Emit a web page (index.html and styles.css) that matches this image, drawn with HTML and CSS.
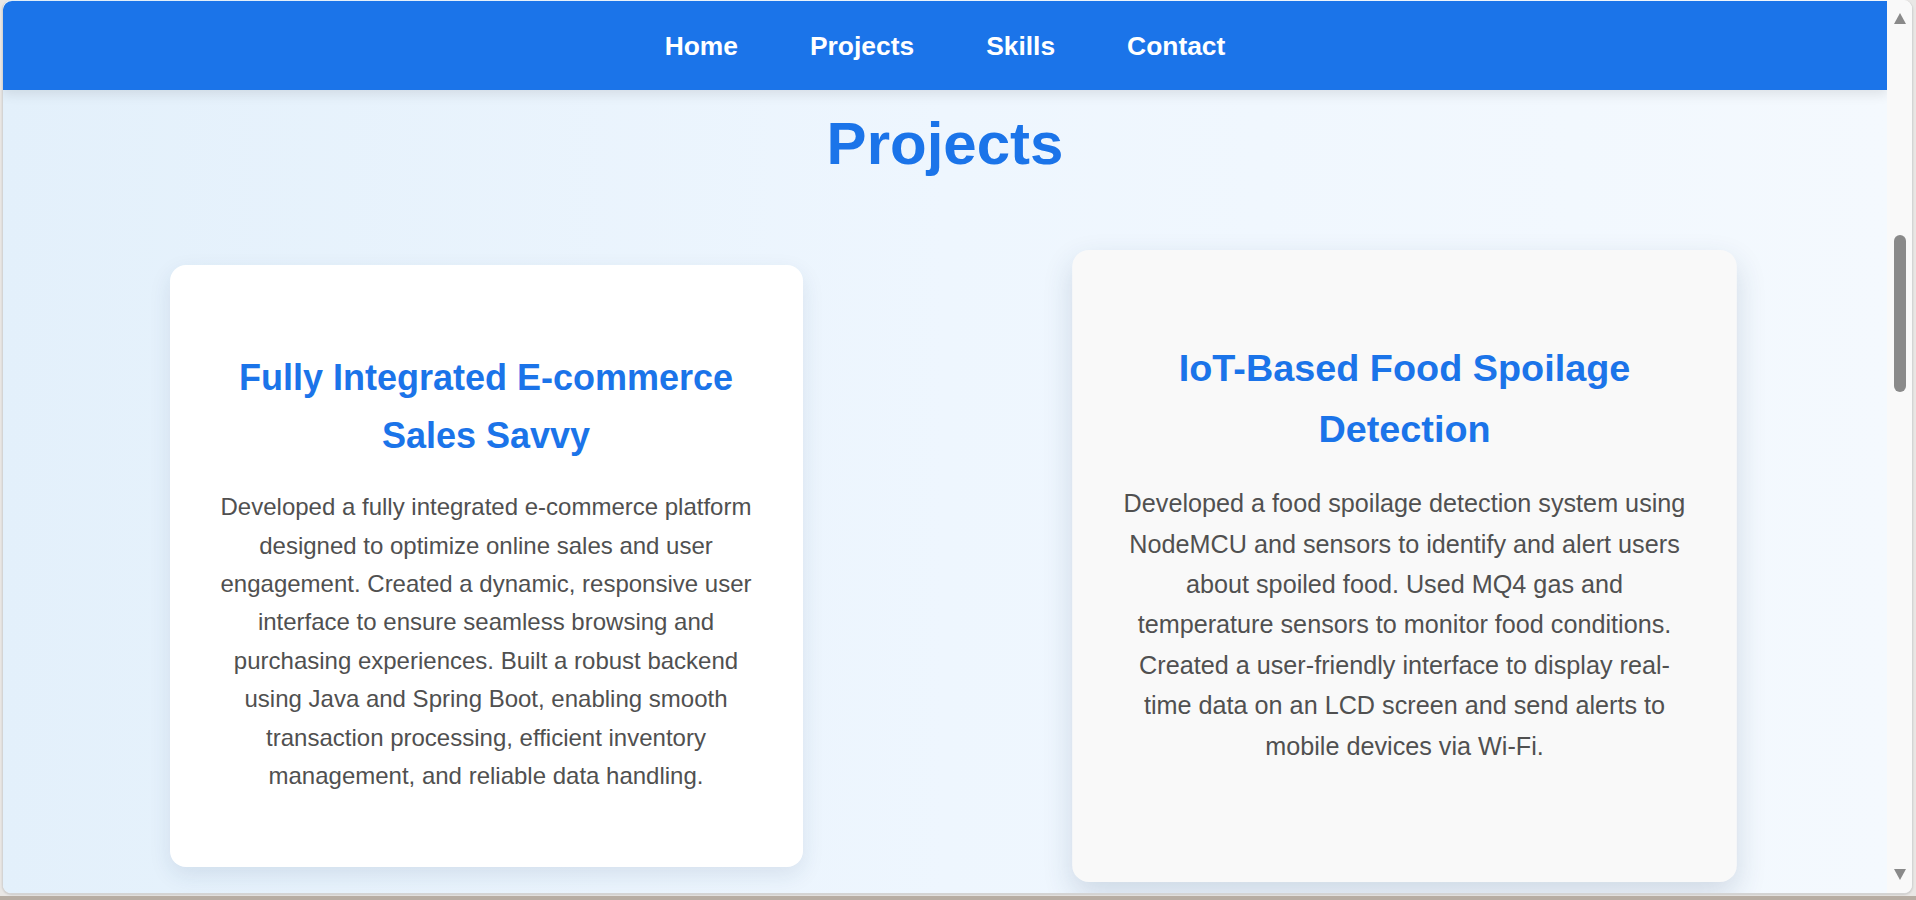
FILE: index.html
```html
<!DOCTYPE html>
<html lang="en">
<head>
<meta charset="utf-8">
<title>Projects</title>
<link rel="stylesheet" href="styles.css">
</head>
<body>
<div class="window">
  <div class="page">
    <nav class="nav">
      <a class="nav-link" href="#">Home</a>
      <a class="nav-link" href="#">Projects</a>
      <a class="nav-link" href="#">Skills</a>
      <a class="nav-link" href="#">Contact</a>
    </nav>
    <section class="projects">
      <h2 class="section-title">Projects</h2>
      <div class="cards">
        <div class="card">
          <h3 class="card-title">Fully Integrated E-commerce Sales Savvy</h3>
          <p class="card-text">Developed a fully integrated e-commerce platform designed to optimize online sales and user engagement. Created a dynamic, responsive user interface to ensure seamless browsing and purchasing experiences. Built a robust backend using Java and Spring Boot, enabling smooth transaction processing, efficient inventory management, and reliable data handling.</p>
        </div>
        <div class="card card-hover">
          <h3 class="card-title">IoT-Based Food Spoilage Detection</h3>
          <p class="card-text">Developed a food spoilage detection system using NodeMCU and sensors to identify and alert users about spoiled food. Used MQ4 gas and temperature sensors to monitor food conditions. Created a user-friendly interface to display real-time data on an LCD screen and send alerts to mobile devices via Wi-Fi.</p>
        </div>
      </div>
    </section>
  </div>
  <div class="scrollbar">
    <div class="arrow arrow-up"></div>
    <div class="track"><div class="thumb"></div></div>
    <div class="arrow arrow-down"></div>
  </div>
</div>
<div class="taskbar"></div>
</body>
</html>
```
FILE: styles.css
```css
html, body {
  margin: 0;
  padding: 0;
}
body {
  width: 1916px;
  height: 900px;
  overflow: hidden;
  background: #e9e7e5;
  font-family: "Liberation Sans", Arial, sans-serif;
}
.window {
  box-sizing: border-box;
  width: 1911px;
  height: 894px;
  margin-left: 2px;
  border: 1px solid #d4d4d4;
  border-top: none;
  border-radius: 9px;
  overflow: hidden;
  display: flex;
  background: #f8f8f8;
  box-shadow: 0 1px 2px rgba(0,0,0,0.12);
}
.page {
  flex: 1;
  overflow: hidden;
  background: linear-gradient(to right, #e3f0fb, #eef6fe 50%, #f4f9fe);
  border-top-left-radius: 9px;
}
.nav {
  margin-top: 1px;
  height: 89px;
  background: #1b74e9;
  display: flex;
  justify-content: center;
  align-items: center;
  box-shadow: 0 5px 12px rgba(0,0,0,0.09);
  position: relative;
  border-top-left-radius: 9px;
}
.nav-link {
  color: #fff;
  text-decoration: none;
  font-weight: bold;
  font-size: 26.4px;
  margin: 0 36px;
  padding-top: 2px;
}
.projects {
  text-align: center;
}
.section-title {
  margin: 18px 0 85px;
  font-size: 60px;
  line-height: 72px;
  color: #1b74e9;
  font-weight: bold;
}
.cards {
  display: grid;
  grid-template-columns: 633px 633px;
  column-gap: 285px;
  justify-content: center;
}
.card {
  box-sizing: border-box;
  background: #fff;
  border-radius: 16px;
  padding: 48px;
  box-shadow: 0 8px 22px rgba(30,60,100,0.10);
}
.card-hover {
  background: #f9f9f9;
  transform: scale(1.05);
  box-shadow: 0 12px 28px rgba(30,60,100,0.16);
}
.card-title {
  margin: 36px 0 24px;
  font-size: 36px;
  line-height: 1.6;
  color: #1b74e9;
  font-weight: bold;
}
.card-text {
  margin: 24px 0;
  font-size: 24px;
  line-height: 1.6;
  color: #505050;
}
.scrollbar {
  width: 25px;
  background: #f9f9f9;
  display: flex;
  flex-direction: column;
  align-items: center;
}
.arrow {
  width: 0;
  height: 0;
  border-left: 6px solid transparent;
  border-right: 6px solid transparent;
}
.arrow-up {
  margin-top: 13px;
  border-bottom: 11px solid #8a8a8a;
}
.arrow-down {
  margin-bottom: 13px;
  border-top: 11px solid #8a8a8a;
}
.track {
  flex: 1;
  width: 100%;
  display: flex;
  justify-content: center;
}
.thumb {
  margin-top: 211px;
  width: 12px;
  height: 157px;
  border-radius: 6px;
  background: #8a8a8a;
}
.taskbar {
  height: 4px;
  margin-top: 2px;
  background: #b7ada3;
}
```
